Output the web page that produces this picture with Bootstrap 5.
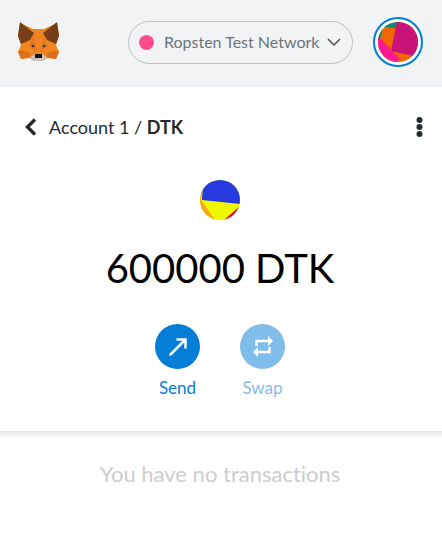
<!DOCTYPE html>
<html lang="en">
<head>
<meta charset="utf-8">
<meta name="viewport" content="width=device-width, initial-scale=1">
<title>Wallet – DTK</title>
<link href="https://cdn.jsdelivr.net/npm/bootstrap@5.3.0/dist/css/bootstrap.min.css" rel="stylesheet">
<style>
body { font-family: Lato, "Open Sans", sans-serif; font-size: 16px; line-height: 20px; color: #24292e; background: #fff; font-variant-ligatures: none; }
svg { display: block; }
.top-bar { background: #f2f3f4; padding: 17px 19px 20px 18px; }
.network { width: 225px; height: 43px; margin-right: 20px; padding: 0 11px 0 10px; border: 1px solid #bbc0c5; color: #6a737d; background: none; }
.network-dot { width: 15px; height: 15px; background: #ff4a8d; }
.network-name { margin-left: 10px; }
.account-btn { width: 50px; height: 50px; border: 2px solid #037dd6; background: #fff; }
.crumbs { padding: 29px 19px 0 24px; font-size: 18px; line-height: 22px; }
.crumb-text { margin-left: 11px; }
.overview { padding: 42px 2px 33px 0; }
.balance { margin: 24px 0 0; font-size: 40px; line-height: 48px; color: #000; font-weight: 400; }
.actions { gap: 40px; margin-top: 32px; }
.action { width: 45px; color: #037dd6; gap: 9px; font-size: 17px; line-height: 20px; }
.action:disabled { color: #037dd6; opacity: .5; }
.action-icon { width: 45px; height: 45px; background: #037dd6; }
.history { box-shadow: inset 0 8px 6px -5px #e2e2e2; padding: 31px 2px 0 0; font-size: 22px; line-height: 24px; color: #cdcdcd; }
</style>
<script src="https://cdn.jsdelivr.net/npm/bootstrap@5.3.0/dist/js/bootstrap.bundle.min.js"></script>
</head>
<body>
<header class="top-bar d-flex align-items-center justify-content-between">
  <a href="#" aria-label="Home">
    <svg width="41" height="40" viewBox="0 0 41 40">
      <path fill="#f08422" d="M2 1l13 6h11l13-6 2 12-3 10 3 7-3 7-9-1-4 3h-9l-4-3-9 1-3-7 3-7L0 13z"/>
      <path fill="#e8771f" d="M13 18l3-6 2 19-5-6zM28 18l-3-6-2 19 5-6z"/>
      <path fill="#763d16" d="M2 0l14 11-4 7-9 4-3-8zM39 0L25 11l4 7 9 4 3-8z"/>
      <path fill="#d96f1c" d="M0 29h11l2 6-10 2zM41 29H30l-2 6 10 2z"/>
      <path fill="#f6851b" d="M3 22l10 4-1 5-9-3zM38 22l-10 4 1 5 9-3z"/>
      <path fill="#b5693a" d="M11 24l4-2 3 3-2 1zM30 24l-4-2-3 3 2 1z"/>
      <path fill="#39404a" d="M14 23h2v2h-2zM25 23h2v2h-2z"/>
      <path fill="#cfc0b6" d="M12 35l5-3h7l5 3-4 4h-9z"/>
      <path fill="#161616" d="M17 32h7v4h-7z"/>
    </svg>
  </a>
  <div class="d-flex align-items-center">
    <button type="button" class="network rounded-pill d-flex align-items-center">
      <span class="network-dot rounded-circle"></span>
      <span class="network-name">Ropsten Test Network</span>
      <svg class="ms-auto" width="14" height="8" viewBox="0 0 14 8" fill="none" stroke="#4d5358" stroke-width="1.5"><path d="M1 1l6 6 6-6"/></svg>
    </button>
    <button type="button" class="account-btn rounded-circle p-0 d-flex align-items-center justify-content-center" aria-label="My accounts">
      <svg width="40" height="40" viewBox="0 0 40 40">
        <defs><clipPath id="avatar"><circle cx="20" cy="20" r="20"/></clipPath></defs>
        <g clip-path="url(#avatar)"><path fill="#f26602" d="M0 0h40v40H0z"/><path fill="#018e77" d="M0 0h20l-2 6-13-1-2 10-3 2z"/><path fill="#c81476" d="M19 0h21v35l-27-6z"/><path fill="#fc1996" d="M0 14l22 23-3 3H0z"/></g>
      </svg>
    </button>
  </div>
</header>
<main>
  <nav class="crumbs d-flex align-items-center" aria-label="Asset">
    <a href="#" class="d-flex align-items-center text-reset text-decoration-none">
      <svg width="14" height="18" viewBox="0 0 14 18" fill="none" stroke="#24292e" stroke-width="3.4"><path d="M11 1.500L3.500 9l7.500 7.500"/></svg>
      <span class="crumb-text">Account 1 /&nbsp;</span>
    </a>
    <strong>DTK</strong>
    <button type="button" class="border-0 bg-transparent p-0 ms-auto" aria-label="Asset options">
      <svg width="7" height="20" viewBox="0 0 7 20" fill="#24292e"><circle cx="3.5" cy="3" r="3"/><circle cx="3.5" cy="10" r="3"/><circle cx="3.5" cy="17" r="3"/></svg>
    </button>
  </nav>
  <section class="overview d-flex flex-column align-items-center">
    <svg width="40" height="40" viewBox="0 0 40 40">
      <defs><clipPath id="token"><circle cx="20" cy="20" r="20"/></clipPath></defs>
      <g clip-path="url(#token)"><path fill="#eff800" d="M0 0h40v40H0z"/><path fill="#faa41a" d="M0 8l3-1-2 13 14 20H0z"/><path fill="#2639df" d="M3 0h37v24L2 20z"/><path fill="#d0102c" d="M40 26v14H24z"/></g>
    </svg>
    <h1 class="balance">600000 DTK</h1>
    <div class="actions d-flex">
      <button type="button" class="action border-0 bg-transparent p-0 d-flex flex-column align-items-center">
        <span class="action-icon rounded-circle d-flex align-items-center justify-content-center">
          <svg width="18" height="18" viewBox="0 0 18 18" fill="none" stroke="#fff" stroke-width="2.500"><path stroke-linecap="round" d="M1.500 16.500L16 2M8.500 1.500h8v8"/></svg>
        </span>
        <span>Send</span>
      </button>
      <button type="button" disabled class="action border-0 bg-transparent p-0 d-flex flex-column align-items-center">
        <span class="action-icon rounded-circle d-flex align-items-center justify-content-center">
          <svg width="20" height="21" viewBox="0 0 20 21" fill="none" stroke="#fff" stroke-width="2.500"><path d="M3.500 10V5H16M16.500 11v5H4"/><path fill="#fff" stroke="none" d="M15 0l5 5-5 5zM5 11l-5 5 5 5z"/></svg>
        </span>
        <span>Swap</span>
      </button>
    </div>
  </section>
  <section class="history text-center">You have no transactions</section>
</main>
</body>
</html>
